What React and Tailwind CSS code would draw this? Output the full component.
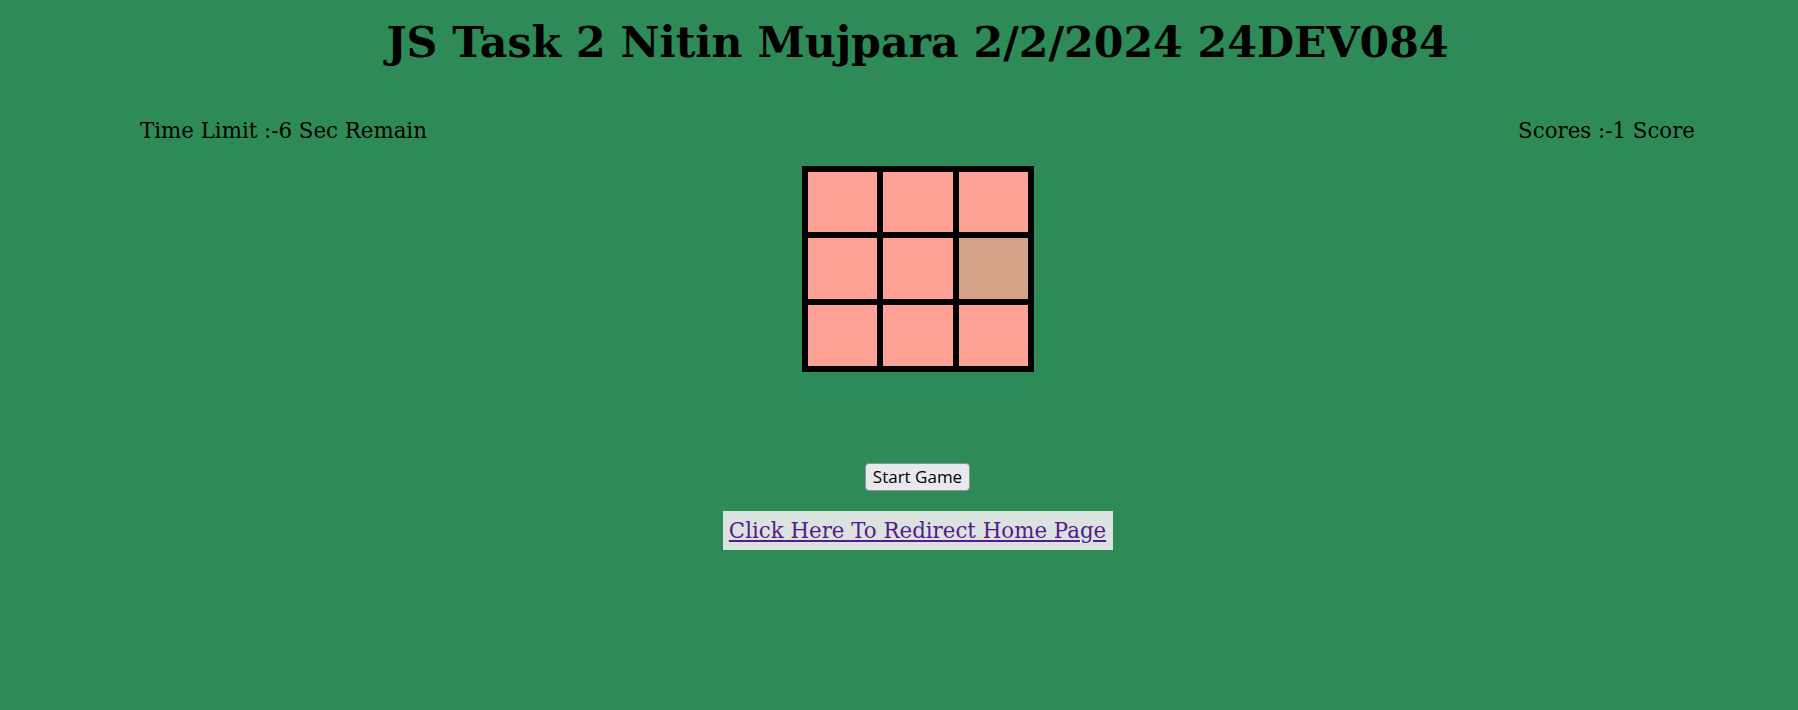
export default function App() {
  const cells = [0, 1, 2, 3, 4, 5, 6, 7, 8]
  const active = 5

  return (
    <div className="min-h-screen w-full overflow-hidden bg-[#2e8b57] text-black" style={{ fontFamily: '"DejaVu Serif", serif' }}>
      <div className="flex w-[1835px] flex-col items-center">
        <h1 className="mt-[16px] text-[42.67px] font-bold leading-[52px]">JS Task 2 Nitin Mujpara 2/2/2024 24DEV084</h1>

        <div className="mt-[50px] flex w-full justify-between px-[140px] text-[21.33px] leading-[26px]">
          <span>Time Limit :-6 Sec Remain</span>
          <span>Scores :-1 Score</span>
        </div>

        <div className="mt-[22px] grid grid-cols-[69px_70px_69px] grid-rows-[60px_61px_61px] gap-[6px] bg-black p-[6px]">
          {cells.map((i) => (
            <div key={i} className={i === active ? 'bg-[#d5a187]' : 'bg-[#ffa195]'} />
          ))}
        </div>

        <button
          className="mt-[91px] h-[28px] rounded-[4px] border border-[#8f8f9d] bg-[#e9e9ed] px-[7px] text-[17px] leading-[20px]"
          style={{ fontFamily: '"Open Sans", sans-serif' }}
        >
          Start Game
        </button>

        <div className="mt-[20px] flex h-[39px] w-[390px] items-center justify-center bg-[#dae3df]">
          <a href="#" className="text-[21.33px] text-[#551a8b] underline">
            Click Here To Redirect Home Page
          </a>
        </div>
      </div>
    </div>
  )
}
